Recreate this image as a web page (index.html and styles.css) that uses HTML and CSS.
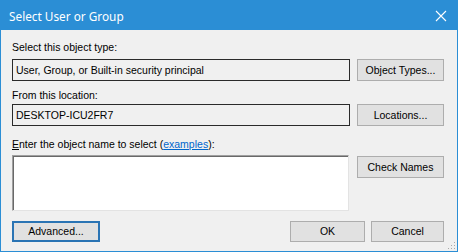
FILE: index.html
```html
<!DOCTYPE html>
<html>
<head>
<meta charset="utf-8">
<link rel="stylesheet" href="styles.css">
</head>
<body>
<div class="window">
  <div class="titlebar">
    <span class="title">Select User or Group</span>
    <span class="close">
      <svg width="12" height="12" viewBox="0 0 12 12"><path d="M1 1 L11 11 M11 1 L1 11" stroke="#fff" stroke-width="1.1" fill="none"/></svg>
    </span>
  </div>
  <div class="content">
    <div class="label l1">Select this object type:</div>
    <div class="row r1">
      <div class="field">User, Group, or Built-in security principal</div>
      <button class="btn">Object Types...</button>
    </div>
    <div class="label l2">From this location:</div>
    <div class="row r2">
      <div class="field">DESKTOP-ICU2FR7</div>
      <button class="btn">Locations...</button>
    </div>
    <div class="label l3"><span class="ak">E</span>nter the object name to select (<a class="link" href="#">examples</a>):</div>
    <div class="row r3">
      <div class="area"></div>
      <button class="btn">Check Names</button>
    </div>
    <div class="footer">
      <button class="btn adv">Advanced...</button>
      <div class="spacer"></div>
      <button class="btn ok">OK</button>
      <button class="btn cancel">Cancel</button>
    </div>
  </div>
  <div class="grip">
    <svg width="8" height="8" viewBox="0 0 8 8">
      <rect x="6" y="0" width="1" height="1" fill="#a8a8a8"/>
      <rect x="3" y="3" width="1" height="1" fill="#a8a8a8"/>
      <rect x="6" y="3" width="1" height="1" fill="#a8a8a8"/>
      <rect x="0" y="6" width="1" height="1" fill="#a8a8a8"/>
      <rect x="3" y="6" width="1" height="1" fill="#a8a8a8"/>
      <rect x="6" y="6" width="1" height="1" fill="#a8a8a8"/>
    </svg>
  </div>
</div>
</body>
</html>
```
FILE: styles.css
```css
html, body {
  margin: 0;
  padding: 0;
  background: #f0f0f0;
}
.window {
  position: relative;
  width: 458px;
  height: 252px;
  box-sizing: border-box;
  border: 1px solid #2b8ed5;
  background: #f0f0f0;
  font-family: "Liberation Sans", Arial, sans-serif;
  font-size: 10.5px;
  color: #000;
  display: flex;
  flex-direction: column;
}
.titlebar {
  height: 29px;
  background: #2b8ed5;
  display: flex;
  align-items: center;
  justify-content: space-between;
  padding: 0 10px 0 8px;
  flex-shrink: 0;
}
.title {
  font-family: "Noto Sans", "Open Sans", sans-serif;
  font-size: 11.8px;
  color: #fff;
  margin-top: 1px;
}
.close {
  display: flex;
  width: 12px;
  height: 12px;
}
.content {
  padding: 0 12px 0 11px;
  display: flex;
  flex-direction: column;
}
.label {
  height: 13px;
  line-height: 13px;
  white-space: nowrap;
}
.l1 { margin-top: 11px; }
.l2 { margin-top: 8px; }
.l3 { margin-top: 12px; }
.row {
  display: grid;
  grid-template-columns: 338px 87px;
  column-gap: 7px;
  align-items: start;
}
.r1 { margin-top: 5px; }
.r2 { margin-top: 2px; }
.r3 { margin-top: 4px; }
.field {
  height: 22px;
  box-sizing: border-box;
  border: 1px solid #2a2a2a;
  background: #f0f0f0;
  padding: 0 3px;
  line-height: 20px;
  white-space: nowrap;
}
.area {
  width: 337px;
  height: 56px;
  box-sizing: border-box;
  background: #fff;
  border-top: 1px solid #a0a0a0;
  border-left: 1px solid #a0a0a0;
  border-right: 1px solid #e3e3e3;
  border-bottom: 1px solid #e3e3e3;
  box-shadow: inset 1px 1px 0 #696969;
}
.btn {
  height: 22px;
  box-sizing: border-box;
  border: 1px solid #adadad;
  background: #e1e1e1;
  font-family: "Liberation Sans", Arial, sans-serif;
  font-size: 10.5px;
  color: #000;
  padding: 0;
  margin: 0;
  line-height: 20px;
}
.r3 .btn { margin-top: 1px; }
.footer {
  display: flex;
  margin-top: 10px;
  height: 21px;
}
.footer .btn { height: 21px; line-height: 19px; }
.adv {
  width: 88px;
  border: 2px solid #2a74b4;
}
.footer .adv { line-height: 17px; }
.spacer { flex: 1; }
.ok { width: 75px; margin-right: 6px; }
.cancel { width: 73px; margin-right: 1px; }
.link {
  color: #0066cc;
  text-decoration: underline;
}
.ak { text-decoration: underline; }
.grip {
  position: absolute;
  right: 1px;
  bottom: 1px;
  width: 8px;
  height: 8px;
  display: flex;
}
```
